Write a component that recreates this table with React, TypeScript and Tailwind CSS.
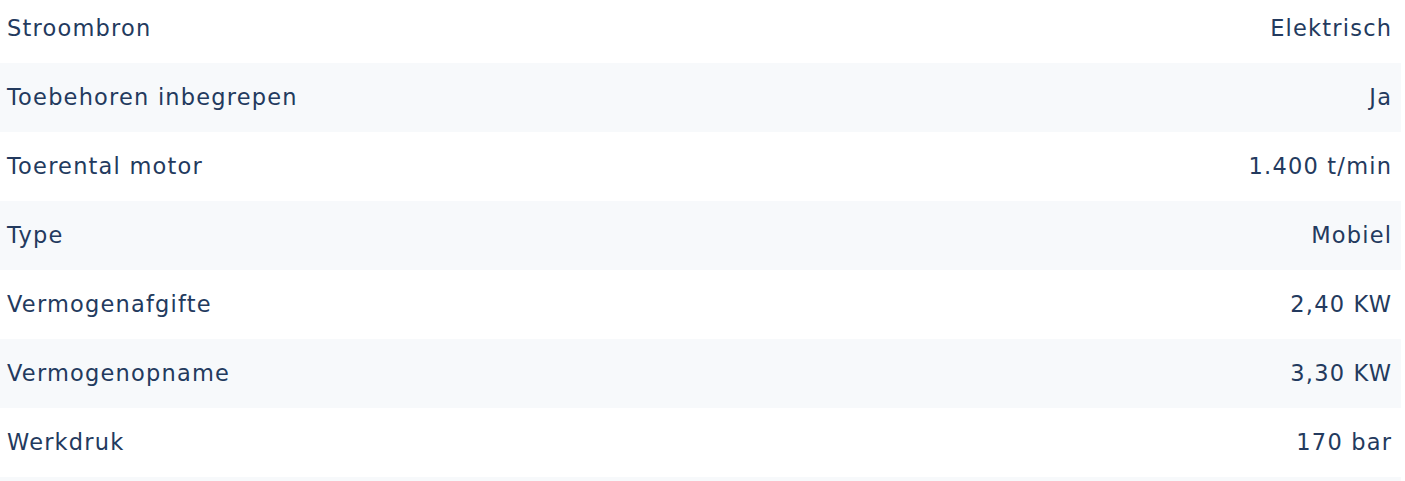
const specs: [string, string][] = [
  ["Stroombron", "Elektrisch"],
  ["Toebehoren inbegrepen", "Ja"],
  ["Toerental motor", "1.400 t/min"],
  ["Type", "Mobiel"],
  ["Vermogenafgifte", "2,40 KW"],
  ["Vermogenopname", "3,30 KW"],
  ["Werkdruk", "170 bar"],
];

export default function App() {
  return (
    <div
      className="bg-white w-[1405px] h-[481px] overflow-hidden"
      style={{ fontFamily: "'DejaVu Sans', Inter, sans-serif" }}
    >
      <div className="w-[1401px] mt-[-6px] flex flex-col">
        {specs.map(([label, value], i) => (
          <div
            key={label}
            className={
              "h-[69px] shrink-0 flex items-center justify-between pl-[7px] pr-[10px] text-[22.5px] tracking-[1.2px] font-normal text-[#233a5e] " +
              (i % 2 === 1 ? "bg-[#f7f9fb]" : "bg-white")
            }
          >
            <span>{label}</span>
            <span className="-mr-[1.2px]">{value}</span>
          </div>
        ))}
        <div className="h-[69px] shrink-0 bg-[#f7f9fb]" />
      </div>
    </div>
  );
}
